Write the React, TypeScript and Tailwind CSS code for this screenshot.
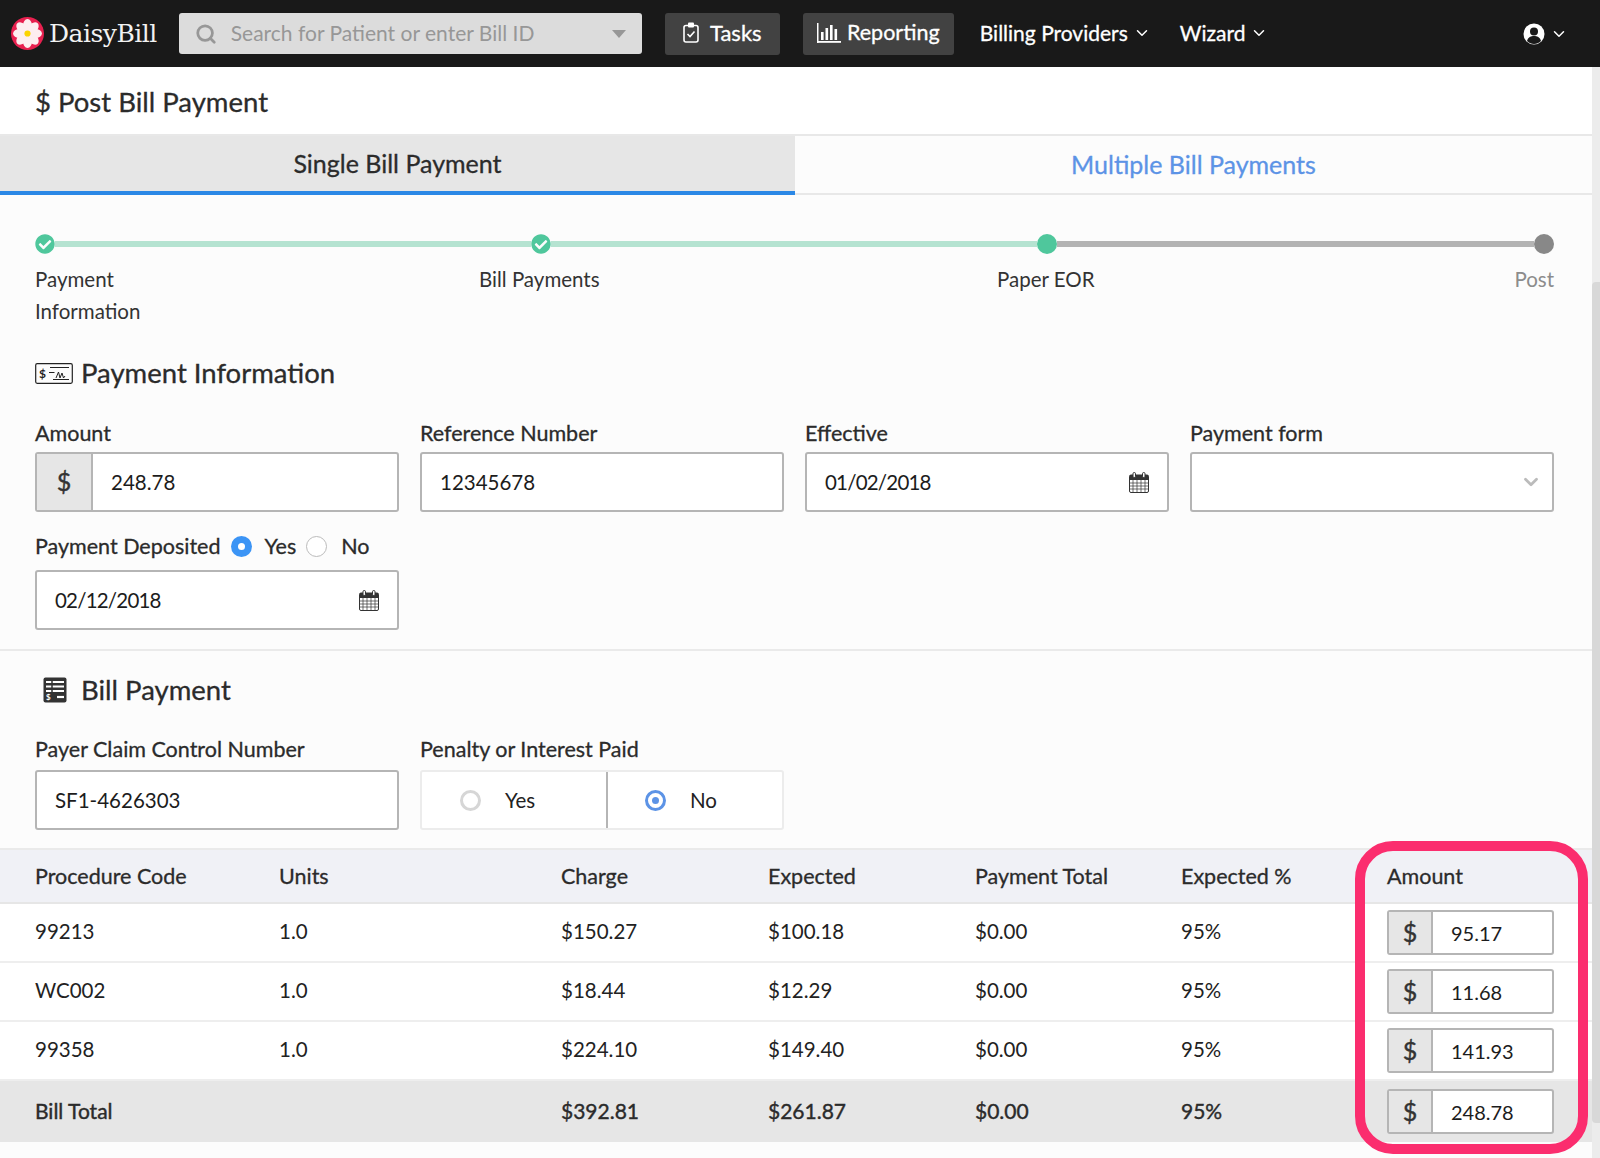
import React from "react";
import { FaCheckCircle } from "react-icons/fa";
import { FiChevronDown, FiSearch } from "react-icons/fi";

const rows = [
  { code: "99213", units: "1.0", charge: "$150.27", expected: "$100.18", total: "$0.00", pct: "95%", amount: "95.17" },
  { code: "WC002", units: "1.0", charge: "$18.44", expected: "$12.29", total: "$0.00", pct: "95%", amount: "11.68" },
  { code: "99358", units: "1.0", charge: "$224.10", expected: "$149.40", total: "$0.00", pct: "95%", amount: "141.93" },
];

const Daisy = () => (
  <svg width="33" height="33" viewBox="0 0 32 32">
    <circle cx="16" cy="16" r="16" fill="#e8204f" />
    {[0, 45, 90, 135, 180, 225, 270, 315].map((a) => (
      <ellipse key={a} cx="16" cy="8.4" rx="4.4" ry="6.4" fill="#fdeef0" transform={`rotate(${a} 16 16)`} />
    ))}
    <circle cx="16" cy="16" r="3" fill="#fbd400" />
  </svg>
);

const Clipboard = () => (
  <svg width="16" height="21" viewBox="0 0 16 21" fill="none" stroke="#fff" strokeWidth="1.6">
    <rect x="1" y="3.5" width="14" height="16.5" rx="2" />
    <rect x="5" y="0.5" width="6" height="5" fill="#fff" stroke="none" rx="1" />
    <path d="M4.5 12l2.5 2.5 4.500-5" />
  </svg>
);

const Bars = () => (
  <svg width="24" height="20" viewBox="0 0 24 20" fill="#fff">
    <rect x="0" y="0" width="1.500" height="20" />
    <rect x="0" y="18" width="24" height="1.800" />
    <rect x="4" y="9" width="2.600" height="8" />
    <rect x="8.500" y="5" width="2.600" height="12" />
    <rect x="13" y="2" width="2.600" height="15" />
    <rect x="17.500" y="6" width="2.600" height="11" />
  </svg>
);

const UserIcon = () => (
  <svg width="22" height="22" viewBox="0 0 22 22">
    <circle cx="11" cy="11" r="10.500" fill="#fff" />
    <circle cx="11" cy="8.500" r="4" fill="#191919" />
    <path d="M4 18c1-4 4-5 7-5s6 1 7 5c-2 2-4.500 3-7 3s-5-1-7-3z" fill="#191919" />
  </svg>
);

const CheckIcon = () => (
  <svg width="38" height="21" viewBox="0 0 38 21" fill="none" stroke="#222">
    <rect x="0.700" y="0.700" width="36.600" height="19.600" rx="1.500" strokeWidth="1.200" />
    <path d="M14 9.500h5.500M15 4.500h19M18 16.500h16" strokeWidth="1" />
    <path d="M21 15l2.500-6 1.500 6 2-5 1.500 5 1.500-2" strokeWidth="1" />
    <text x="4" y="15" fontSize="12" fill="#222" stroke="none" fontFamily="Lato, sans-serif" fontWeight="700">$</text>
  </svg>
);

const LedgerIcon = () => (
  <svg width="24" height="26" viewBox="0 0 24 26">
    <rect x="0.500" y="0.500" width="23" height="25" rx="2" fill="#333" />
    <path d="M3 5h18M3 9.500h18M3 14h18" stroke="#fff" strokeWidth="1.800" />
    <path d="M9 3v13" stroke="#333" strokeWidth="1.500" />
    <path d="M14 20h7" stroke="#fff" strokeWidth="2.200" />
    <text x="3" y="23" fontSize="8" fill="#fff" fontFamily="Lato, sans-serif" fontWeight="700">$</text>
  </svg>
);

const Calendar = () => (
  <svg width="20" height="21" viewBox="0 0 20 21" fill="none" stroke="#333">
    <rect x="0.500" y="3" width="19" height="17.500" rx="1.500" />
    <path d="M1 3.500h18v4H1z" fill="#333" />
    <path d="M0.500 11h19M0.500 14h19M0.500 17h19M4 7v13M8 7v13M12 7v13M16 7v13" strokeWidth="0.700" />
    <rect x="4" y="0.500" width="2.500" height="5" rx="1.200" fill="#fff" />
    <rect x="13.500" y="0.500" width="2.500" height="5" rx="1.200" fill="#fff" />
  </svg>
);

const Label = ({ children, className = "mb-[8px]" }: { children: React.ReactNode; className?: string }) => (
  <div className={`h-[21px] text-[21.5px] leading-[21px] text-[#2b2b2b] [-webkit-text-stroke:0.3px] ${className}`}>{children}</div>
);

const Box = ({ children, className = "" }: { children?: React.ReactNode; className?: string }) => (
  <div className={`flex h-[60px] items-center rounded-[3px] border-2 border-[#b5b5b5] bg-white text-[20.5px] text-[#1c1c1c] ${className}`}>
    {children}
  </div>
);

const DateBox = ({ value }: { value: string }) => (
  <Box className="justify-between pr-[18px] pl-[18px]">
    <span className="tracking-[-0.8px]">{value}</span>
    <Calendar />
  </Box>
);

const MoneyInput = ({ value }: { value: string }) => (
  <div className="mt-[2px] flex h-[45px] w-[167px] overflow-hidden rounded-[3px] border-2 border-[#b5b5b5] bg-white [-webkit-text-stroke:0px]">
    <div className="flex w-[44px] items-center justify-center border-r-2 border-[#b5b5b5] bg-[#e6e6e6] text-[25px] text-[#333] [-webkit-text-stroke:0.4px]">$</div>
    <div className="flex flex-1 items-center pl-[18px] text-[20px] text-[#1c1c1c]">{value}</div>
  </div>
);

const Row = ({ r }: { r: (typeof rows)[number] }) => (
  <div className="grid h-[59px] grid-cols-[244px_282px_207px_207px_206px_206px_1fr] items-center border-b-2 border-[#eeeeee] bg-white pb-[2px] pl-[35px] text-[20.5px] text-[#222]">
    <div>{r.code}</div>
    <div>{r.units}</div>
    <div>{r.charge}</div>
    <div>{r.expected}</div>
    <div>{r.total}</div>
    <div>{r.pct}</div>
    <MoneyInput value={r.amount} />
  </div>
);

export default function App() {
  return (
    <div className="relative h-[1158px] overflow-hidden bg-[#fcfcfc] font-['Lato',sans-serif] text-[#222]">
      <nav className="flex h-[67px] items-center bg-[#191919] pr-[32px] pl-[11px] text-white">
        <Daisy />
        <span className="ml-[5px] font-['DejaVu_Serif',serif] text-[25px] tracking-[-0.5px] text-[#f2f2f2]">DaisyBill</span>
        <div className="ml-[22px] flex h-[41px] w-[463px] items-center rounded-[3px] bg-[#dcdcdc] pr-[16px] pl-[16px] text-[21px] text-[#979797]">
          <FiSearch className="mr-[14px] text-[22px] text-[#979797]" strokeWidth={3} />
          <span className="flex-1 pb-[1px]">Search for Patient or enter Bill ID</span>
          <span className="h-0 w-0 border-x-[7px] border-t-[8px] border-x-transparent border-t-[#979797]" />
        </div>
        <button className="ml-[23px] flex h-[42px] w-[115px] items-center justify-center gap-[11px] rounded-[3px] bg-[#424242] pb-[2px] text-[22px] [-webkit-text-stroke:0.3px]">
          <Clipboard />
          Tasks
        </button>
        <button className="ml-[23px] flex h-[42px] w-[151px] items-center justify-center gap-[6px] rounded-[3px] bg-[#424242] pb-[2px] text-[21.5px] [-webkit-text-stroke:0.3px]">
          <Bars />
          Reporting
        </button>
        <span className="ml-[26px] flex items-center gap-[5px] pb-[2px] text-[21px] [-webkit-text-stroke:0.3px]">
          Billing Providers <FiChevronDown className="text-[18px]" />
        </span>
        <span className="ml-[29px] flex items-center gap-[5px] pb-[2px] text-[21px] [-webkit-text-stroke:0.3px]">
          Wizard <FiChevronDown className="text-[18px]" />
        </span>
        <span className="ml-auto flex items-center gap-[5px]">
          <UserIcon />
          <FiChevronDown className="text-[18px]" />
        </span>
      </nav>

      <div className="mr-[8px]">
        <header className="flex h-[69px] items-center border-b-2 border-[#e8e8e8] bg-white pt-[3px] pl-[35px] text-[27.5px] text-[#2b2b2b] [-webkit-text-stroke:0.3px]">
          $ Post Bill Payment
        </header>

        <div className="flex h-[59px] text-[25px] [-webkit-text-stroke:0.3px]">
          <div className="flex w-[795px] items-center justify-center border-b-4 border-[#2b88e6] bg-[#e6e6e6] text-[#2b2b2b]">Single Bill Payment</div>
          <div className="flex flex-1 items-center justify-center border-b-2 border-[#e8e8e8] text-[#5c93e6]">Multiple Bill Payments</div>
        </div>

        <section className="pt-[39px] pr-[38px] pl-[35px]">
          <div className="flex items-center">
            <FaCheckCircle className="text-[20px] text-[#4fc79c]" />
            <div className="h-[6px] w-[476px] bg-[#b5e3d1]" />
            <FaCheckCircle className="text-[20px] text-[#4fc79c]" />
            <div className="h-[6px] w-[486px] bg-[#b5e3d1]" />
            <div className="h-[20px] w-[20px] rounded-full bg-[#4fc79c]" />
            <div className="h-[6px] w-[477px] bg-[#b3b3b3]" />
            <div className="h-[20px] w-[20px] rounded-full bg-[#888]" />
          </div>
          <div className="mt-[9px] grid h-[64px] grid-cols-[424px_496px_500px_1fr] text-[20.5px] leading-[32px] text-[#333]">
            <div className="w-[120px]">Payment Information</div>
            <div className="pl-[20px]">Bill Payments</div>
            <div className="pl-[42px]">Paper EOR</div>
            <div className="text-right text-[#8c8c8c]">Post</div>
          </div>

          <h2 className="mt-[29px] flex h-[34px] items-center gap-[8px] text-[27.5px] text-[#2b2b2b] [-webkit-text-stroke:0.3px]">
            <CheckIcon />
            Payment Information
          </h2>

          <div className="mt-[33px] flex gap-[21px]">
            <div className="flex-1">
              <Label>Amount</Label>
              <Box className="overflow-hidden">
                <div className="flex h-full w-[56px] items-center justify-center border-r-2 border-[#b5b5b5] bg-[#e6e6e6] text-[25px] text-[#333] [-webkit-text-stroke:0.4px]">$</div>
                <span className="pl-[18px]">248.78</span>
              </Box>
            </div>
            <div className="flex-1">
              <Label>Reference Number</Label>
              <Box className="pl-[18px]">12345678</Box>
            </div>
            <div className="flex-1">
              <Label>Effective</Label>
              <DateBox value="01/02/2018" />
            </div>
            <div className="flex-1">
              <Label>Payment form</Label>
              <Box className="justify-end pr-[10px]">
                <FiChevronDown className="text-[22px] text-[#bbb]" strokeWidth={3} />
              </Box>
            </div>
          </div>

          <div className="mt-[22px] flex h-[24px] items-center text-[21.5px] text-[#2b2b2b] [-webkit-text-stroke:0.3px]">
            Payment Deposited
            <span className="ml-[11px] flex h-[21px] w-[21px] items-center justify-center rounded-full bg-[#3b94f5]">
              <span className="h-[7px] w-[7px] rounded-full bg-white" />
            </span>
            <span className="ml-[12px]">Yes</span>
            <span className="ml-[10px] h-[21px] w-[21px] rounded-full border border-[#bbb] bg-white" />
            <span className="ml-[14px]">No</span>
          </div>
          <div className="mt-[12px] w-[364px]">
            <DateBox value="02/12/2018" />
          </div>
        </section>

        <div className="mt-[19px] border-t-2 border-[#eaeaea]" />

        <section className="pr-[38px] pl-[35px]">
          <h2 className="mt-[22px] flex h-[34px] items-center gap-[14px] pl-[8px] text-[27.5px] text-[#2b2b2b] [-webkit-text-stroke:0.3px]">
            <LedgerIcon />
            Bill Payment
          </h2>
          <div className="mt-[32px] flex gap-[21px]">
            <div className="w-[364px]">
              <Label className="mb-[10px]">Payer Claim Control Number</Label>
              <Box className="pl-[18px]">SF1-4626303</Box>
            </div>
            <div className="w-[364px]">
              <Label className="mb-[10px]">Penalty or Interest Paid</Label>
              <div className="flex h-[60px] rounded-[3px] border-2 border-[#ececec] bg-white text-[20.5px] text-[#222]">
                <div className="flex w-[186px] items-center border-r-2 border-[#b5b5b5] pl-[38px]">
                  <span className="h-[21px] w-[21px] rounded-full border-[3px] border-[#d6d6d6]" />
                  <span className="ml-[24px]">Yes</span>
                </div>
                <div className="flex flex-1 items-center pl-[37px]">
                  <span className="flex h-[21px] w-[21px] items-center justify-center rounded-full border-[3px] border-[#5c93e6]">
                    <span className="h-[7px] w-[7px] rounded-full bg-[#5c93e6]" />
                  </span>
                  <span className="ml-[24px]">No</span>
                </div>
              </div>
            </div>
          </div>
        </section>

        <div className="mt-[18px] border-t-2 border-[#eaeaea]">
          <div className="grid h-[54px] grid-cols-[244px_282px_207px_207px_206px_206px_1fr] items-center border-b-2 border-[#e6e6e6] bg-[#f0f1f6] pl-[35px] text-[21.5px] text-[#2b2b2b] [-webkit-text-stroke:0.3px]">
            <div>Procedure Code</div>
            <div>Units</div>
            <div>Charge</div>
            <div>Expected</div>
            <div>Payment Total</div>
            <div>Expected %</div>
            <div>Amount</div>
          </div>
          {rows.map((r) => (
            <Row key={r.code} r={r} />
          ))}
          <div className="grid h-[61px] grid-cols-[244px_282px_207px_207px_206px_206px_1fr] items-center bg-[#e6e6e6] pb-[2px] pl-[35px] text-[21px] text-[#2b2b2b] [-webkit-text-stroke:0.4px]">
            <div>Bill Total</div>
            <div />
            <div>$392.81</div>
            <div>$261.87</div>
            <div>$0.00</div>
            <div>95%</div>
            <MoneyInput value="248.78" />
          </div>
        </div>
      </div>

      {/* scrollbar */}
      <div className="absolute top-[67px] right-0 bottom-0 w-[8px] bg-[#ececec]">
        <div className="mt-[215px] h-[841px] rounded-l-[4px] bg-[#d8d8d8]" />
      </div>

      {/* pink highlight round the amount column */}
      <div className="absolute top-[841px] left-[1355px] h-[313px] w-[233px] rounded-[38px] border-[10px] border-[#fb2d6e]" />
    </div>
  );
}
